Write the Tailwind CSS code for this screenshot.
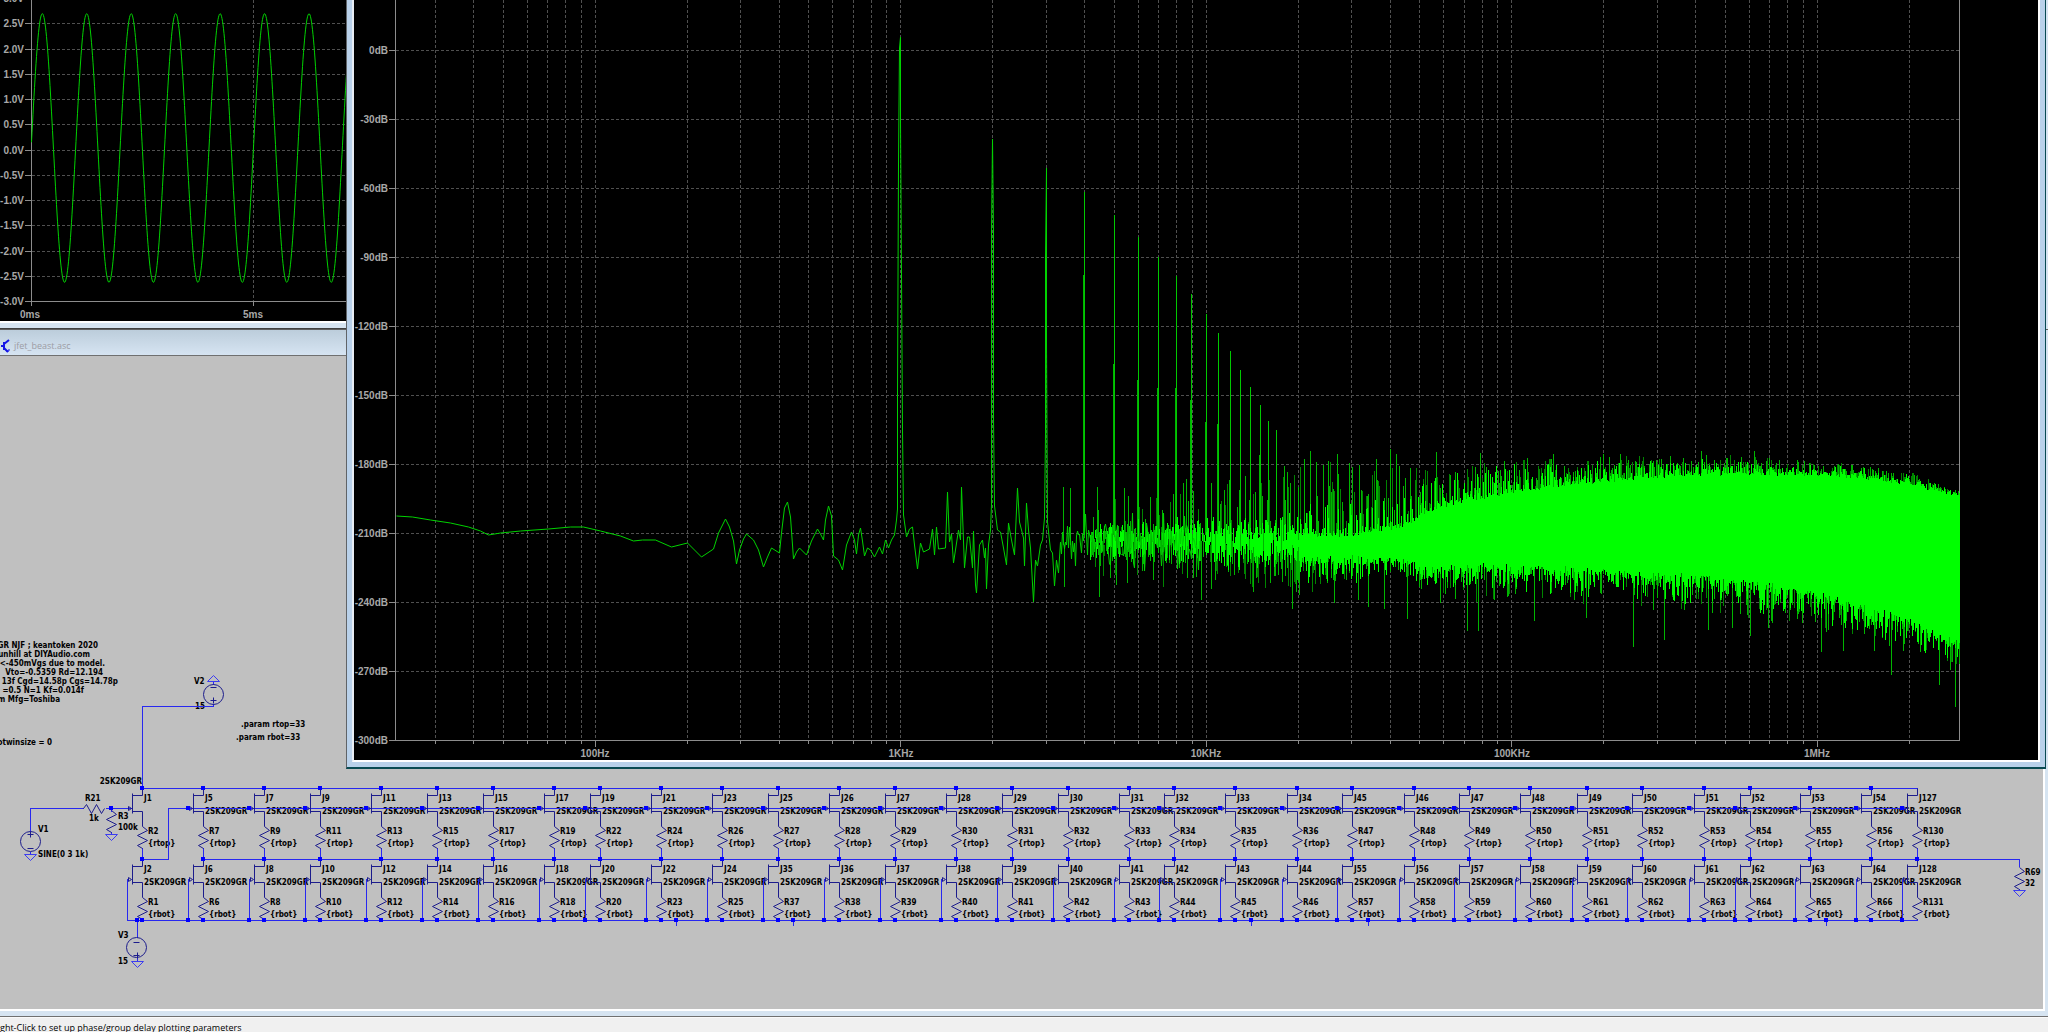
<!DOCTYPE html>
<html lang="en">
<head>
  <meta charset="UTF-8" />
  <meta name="viewport" content="width=device-width, initial-scale=1" />
  <title>jfet_beast.asc</title>
  <script src="https://cdn.jsdelivr.net/npm/@tailwindcss/browser@4"></script>
</head>
<body class="h-screen overflow-hidden flex flex-col bg-[#f0f0f0] font-['Open_Sans',sans-serif]">

  <!-- MDI area -->
  <main class="relative flex-1 overflow-hidden bg-[#d6e4f1]">

    <!-- Transient window -->
    <section class="absolute top-0 left-0 w-[347px] h-[329px] bg-[#d6e4f1] border-b border-[#404040]">
      <div class="bg-black border-b-2 border-white">
        <svg id="wave" class="block w-full" viewBox="0 0 347 321" font-family="'Liberation Sans', Arial, sans-serif" font-size="10" font-weight="bold"></svg>
      </div>
    </section>

    <!-- Schematic window -->
    <section class="absolute top-[329px] inset-x-0 bottom-0 flex flex-col border-t border-[#606060] border-b border-b-[#707070] pr-[3px] pb-[5px] bg-[#d6e4f1]">
      <header class="h-[25px] pt-[6px] flex items-center gap-1 bg-linear-to-b from-[#bccddb] to-[#d6e4f2]">
        <svg class="w-[10px] h-[14px]" viewBox="0 0 10 14" fill="none" stroke="#1414e6" stroke-width="2"><path d="M1 7h3M4 3v8M4 5l5-4M4 9l4 4" /><path d="M6 12h3v-2" stroke-width="1" /></svg>
        <h1 class="text-[9px] leading-3 text-[#9c9ca4]">jfet_beast.asc</h1>
      </header>
      <div class="flex-1 overflow-hidden bg-[#c0c0c0] border-t border-t-[#707070] border-r-2 border-b-2 border-white">
        <svg id="schematic" class="block w-full" viewBox="0 356 2043 652" font-family="'DejaVu Sans Condensed', 'DejaVu Sans', sans-serif" font-size="8" font-weight="bold"></svg>
      </div>
    </section>

    <!-- FFT window -->
    <section class="absolute top-0 left-[346px] right-[2px] h-[769px] border-x border-b-2 border-l-[#606468] border-r-[#0a4a52] border-b-[#0a4a52] bg-[#b9d1ea] pl-[5px] pr-[5px] pb-[5px]">
      <div class="h-full bg-black border-x-2 border-b-2 border-l-[#e8eef4] border-r-white border-b-white">
        <svg id="fft" class="block w-full h-full" viewBox="354 0 1684 760" preserveAspectRatio="xMinYMin" font-family="'Liberation Sans', Arial, sans-serif" font-size="10" font-weight="bold"></svg>
      </div>
    </section>
  </main>

  <footer class="h-[15px] border-t border-[#fafafa] text-[9px] leading-[20px] text-black whitespace-nowrap">ght-Click to set up phase/group delay plotting parameters</footer>

  <script>
    const path = (d, stroke, extra = '') => `<path d="${d}" fill="none" stroke="${stroke}" ${extra}/>`;
    const text = (x, y, s, anchor = 'start', fill = '#000') => `<text x="${x}" y="${y}" text-anchor="${anchor}" fill="${fill}">${s}</text>`;
    const crisp = 'shape-rendering="crispEdges"';
    const AXIS = '#8c8c8c', GRID = '#505050', LABEL = '#a8a8a8';

    // ---- transient plot
    function drawWave() {
      let grid = '', ticks = 'M31.5 0V306M25 301.5H347M253.5 301V306', out = '';
      for (let v = 3; v >= -3; v -= 0.5) {
        const y = Math.floor(150 - v * 50.5) + 0.5;
        if (v < 3 && v > -3) grid += `M32 ${y}H347`;
        ticks += `M25 ${y}H31`;
        out += text(24, y + 3, v.toFixed(1) + 'V', 'end', LABEL);
      }
      grid += 'M253.5 0V301';
      let d = '';
      for (let x = 31.5; x <= 348; x += 0.5) {
        const y = 148 - 134.3 * Math.sin((x - 31.2) / 44.45 * 2 * Math.PI);
        d += (d ? 'L' : 'M') + x + ' ' + y.toFixed(1);
      }
      out += text(30, 318, '0ms', 'middle', LABEL) + text(253, 318, '5ms', 'middle', LABEL);
      document.getElementById('wave').innerHTML =
        path(grid, GRID, crisp + ' stroke-dasharray="3 2"') + path(ticks, AXIS, crisp) + path(d, '#00d200') + out;
    }

    // ---- FFT plot
    let seed = 7;
    const rnd = () => (seed = (seed * 16807) % 2147483647) / 2147483647;
    const fx = f => 595.1 + 305.55 * Math.log10(f / 100);

    // x, dense top, dense bottom, spike top, spike bottom
    const envelope = [
      [1030, 537, 545, 495, 580], [1100, 532, 552, 490, 582], [1160, 528, 557, 488, 590],
      [1200, 525, 558, 485, 595], [1250, 523, 561, 475, 592], [1300, 533, 562, 460, 594],
      [1350, 533, 560, 462, 590], [1400, 525, 562, 463, 588], [1430, 508, 572, 468, 592],
      [1460, 500, 570, 466, 602], [1490, 494, 568, 462, 602], [1512, 490, 570, 459, 600],
      [1560, 483, 572, 456, 604], [1600, 479, 574, 456, 606], [1650, 475, 578, 455, 610],
      [1700, 473, 580, 454, 614], [1750, 472, 584, 456, 622], [1817, 472, 596, 461, 630],
      [1860, 475, 608, 464, 642], [1910, 482, 624, 472, 652], [1940, 490, 640, 484, 668], [1959, 493, 645, 489, 668]
    ];
    function envAt(x) {
      let i = 0;
      while (i < envelope.length - 2 && envelope[i + 1][0] < x) i++;
      const a = envelope[i], b = envelope[i + 1], t = (x - a[0]) / (b[0] - a[0]);
      return a.map((v, k) => v + (b[k] - v) * t);
    }

    function drawFft() {
      let grid = '', ticks = 'M395.5 0V740.5H1959.5V0', out = '';
      for (let db = 0; db <= 300; db += 30) {
        const y = Math.round(50 + db * 2.3) + 0.5;
        if (db < 300) grid += `M396 ${y}H1959`;
        ticks += `M389 ${y}H395`;
        out += text(388, y + 3, (db ? -db : 0) + 'dB', 'end', LABEL);
      }
      for (let dec = 10; dec <= 1e6; dec *= 10) {
        for (let m = 1; m < 10; m++) {
          const x = Math.floor(fx(dec * m)) + 0.5;
          if (x < 396 || x > 1958) continue;
          grid += `M${x} 0V740`;
          ticks += `M${x} 741V${m === 1 ? 747 : 744}`;
        }
      }
      [[100, '100Hz'], [1e3, '1KHz'], [1e4, '10KHz'], [1e5, '100KHz'], [1e6, '1MHz']]
        .forEach(([f, s]) => out += text(Math.round(fx(f)), 757, s, 'middle', LABEL));

      // low frequency part, bin by bin
      const low = [396,516, 412,517, 430,520, 450,523, 468,527, 480,531, 488,535, 500,533, 520,531, 548,529, 570,527, 583,527, 600,531,
        620,536, 633,541, 642,540, 655,540, 671,547, 687,543, 701,557, 713,549, 718,533, 724,521, 725,519, 729,527, 733,541, 736,564, 739,550, 743,539,
        746,534, 753,540, 758,550, 763,567, 767,557, 771,548, 779,553, 781,533, 784,508, 787,502, 790,517, 793,559, 796,552, 799,548, 806,555,
        811,541, 817,529, 820,534, 823,540, 825,520, 828,506, 831,516, 833,556, 838,560, 842,570, 846,545, 851,532, 854,540, 856,554, 858,535,
        860,528, 862,541, 864,556, 867,548, 870,550, 874,557, 879,547, 882,554, 885,540, 888,548, 891,540, 894,535, 896,520, 897,509,
        897,395, 898,165, 899,48, 900,37, 900,120, 901,275, 902,430, 903,515, 906,537, 909,529, 912,527, 914,545, 917,569, 920,543, 923,552, 929,549, 932,529,
        934,555, 936,527, 938,549, 945,548, 947,492, 949,542, 951,534, 953,563, 958,530, 960,540, 961,487, 964,568, 967,537, 969,537, 972,568,
        973,531, 975,585, 976,593, 979,545, 982,540, 984,558, 985,548, 986,589, 988,545, 990,530, 991,505, 991,230, 992,139, 993,232, 993,418, 994,506, 997,530,
        1000,532, 1003,548, 1006,565, 1008,523, 1011,540, 1014,555, 1017,488, 1019,522, 1023,538, 1024,566, 1026,503, 1028,530, 1030,548,
        1033,602, 1035,560, 1037,566, 1040,545, 1042,540, 1044,518, 1045,433, 1045,256, 1046,168, 1046,345, 1047,522, 1050,550, 1052,553, 1054,586, 1056,560, 1058,573, 1060,542];
      let d = '';
      for (let i = 0; i < low.length; i += 2) d += (i ? 'L' : 'M') + (low[i] + 0.5) + ' ' + low[i + 1];
      for (let x = 1061; x < 1200; x++) {
        const r = rnd(), amp = r < 0.8 ? 16 : 30;
        d += `L${x + 0.5} ${Math.round(541 + (rnd() - 0.5) * 2 * amp)}`;
      }

      // one column per pixel: solid core plus dimmer spikes
      let core = '', dim = '', mid = '';
      for (let x = 1090; x < 1960; x++) {
        const e = envAt(x), sparse = x < 1300;
        if (sparse) {
          // short runs around the noise floor, denser to the right
          const c = 541 + (rnd() - 0.5) * 14, h = 3 + rnd() * (10 + (x - 1090) / 16);
          const run = `M${x + 0.5} ${Math.round(c - h)}V${Math.round(c + h)}`;
          if (rnd() < 0.45 + (x - 1090) / 380) core += run; else mid += run;
        } else {
          const top = e[1] - Math.pow(rnd(), 3) * (e[1] - e[3]) * (x < 1420 ? 0.45 : 0.9) + rnd() * 4;
          const bot = e[2] + Math.pow(rnd(), 2.2) * (e[4] - e[2]) * 0.8 - rnd() * 6;
          core += `M${x + 0.5} ${Math.round(top)}V${Math.round(bot)}`;
        }
        const up = Math.round(e[1] - (e[1] - e[3]) * Math.pow(rnd(), x < 1420 ? 1.2 : 1));
        const dn = Math.round(e[2] + (e[4] - e[2]) * Math.pow(rnd(), 1.8));
        const pUp = x < 1250 ? 0.2 : x < 1330 ? 0.42 : 0.66;
        if (rnd() < pUp) { if (rnd() < 0.5) dim += `M${x + 0.5} ${up}V545`; else mid += `M${x + 0.5} ${up}V545`; }
        if (rnd() < (x < 1250 ? 0.3 : 0.5)) { if (rnd() < 0.4) dim += `M${x + 0.5} ${dn}V545`; else mid += `M${x + 0.5} ${dn}V545`; }
      }
      [[1063, 487], [1070, 488], [1097, 487], [1124, 488], [1128, 496], [1150, 497], [1183, 483], [1186, 479], [1211, 483], [1224, 490], [1245, 476],
       [1284, 466], [1290, 483], [1304, 459], [1310, 451], [1316, 462], [1328, 461], [1337, 454], [1352, 467], [1376, 459], [1390, 449], [1396, 454], [1436, 452], [1480, 453],
       [1553, 454], [1603, 454], [1620, 454], [1701, 451], [1754, 451], [1064, 587], [1099, 597], [1116, 585], [1153, 580], [1187, 578], [1201, 600], [1211, 589], [1253, 592],
       [1292, 609], [1299, 595], [1334, 603], [1358, 600], [1368, 607], [1384, 609], [1407, 619], [1440, 603], [1467, 631], [1478, 631], [1534, 621], [1586, 618],
       [1633, 647], [1664, 640], [1708, 630], [1732, 628], [1750, 636], [1768, 628], [1821, 652], [1843, 651], [1874, 651], [1891, 675], [1903, 651], [1939, 685], [1950, 670], [1955, 707], [1959, 664]]
        .forEach(([x, y]) => mid += `M${x + 0.5} ${y}V545`);

      // harmonics: x, tip, where the skirt gets wider
      let tips = '';
      [[1084, 192, 275], [1114, 215, 364], [1138, 237, 380], [1158, 257, 388], [1176, 276, 388], [1191, 294, 400], [1206, 314, 422],
       [1218, 333, 424], [1230, 351, 480], [1240, 370, 490], [1250, 387, 500], [1260, 405, 455], [1268, 421, 500], [1276, 430, 520]]
        .forEach(([x, y, w]) => { tips += `M${x + 0.5} ${y}V535`; mid += `M${x - 0.5} ${w}V535`; });

      document.getElementById('fft').innerHTML =
        path(grid, GRID, crisp + ' stroke-dasharray="3 2"') + path(ticks, AXIS, crisp) +
        path(dim, '#008400', crisp) + path(mid, '#00b400', crisp) + path(tips, '#00c800', crisp) +
        path(core, '#00ff00', crisp) + path(d, '#00d200') + out;
    }

    // ---- schematic
    // x of the drain, upper JFET, upper R, lower JFET, lower R
    const cells = [
      [142, 'J1', 'R2', 'J2', 'R1'], [203, 'J5', 'R7', 'J6', 'R6'], [264, 'J7', 'R9', 'J8', 'R8'], [320, 'J9', 'R11', 'J10', 'R10'],
      [381, 'J11', 'R13', 'J12', 'R12'], [437, 'J13', 'R15', 'J14', 'R14'], [493, 'J15', 'R17', 'J16', 'R16'], [554, 'J17', 'R19', 'J18', 'R18'],
      [600, 'J19', 'R22', 'J20', 'R20'], [661, 'J21', 'R24', 'J22', 'R23'], [722, 'J23', 'R26', 'J24', 'R25'], [778, 'J25', 'R27', 'J35', 'R37'],
      [839, 'J26', 'R28', 'J36', 'R38'], [895, 'J27', 'R29', 'J37', 'R39'], [956, 'J28', 'R30', 'J38', 'R40'], [1012, 'J29', 'R31', 'J39', 'R41'],
      [1068, 'J30', 'R32', 'J40', 'R42'], [1129, 'J31', 'R33', 'J41', 'R43'], [1174, 'J32', 'R34', 'J42', 'R44'], [1235, 'J33', 'R35', 'J43', 'R45'],
      [1297, 'J34', 'R36', 'J44', 'R46'], [1352, 'J45', 'R47', 'J55', 'R57'], [1414, 'J46', 'R48', 'J56', 'R58'], [1469, 'J47', 'R49', 'J57', 'R59'],
      [1530, 'J48', 'R50', 'J58', 'R60'], [1587, 'J49', 'R51', 'J59', 'R61'], [1642, 'J50', 'R52', 'J60', 'R62'], [1704, 'J51', 'R53', 'J61', 'R63'],
      [1750, 'J52', 'R54', 'J62', 'R64'], [1810, 'J53', 'R55', 'J63', 'R65'], [1871, 'J54', 'R56', 'J64', 'R66'], [1917, 'J127', 'R130', 'J128', 'R131']
    ];

    function drawSchematic() {
      let wire = '', sym = '', gnd = '', dots = '', labels = '';
      const dot = (x, y) => dots += `<rect x="${x - 2}" y="${y - 2}" width="4" height="4"/>`;
      const zig = (x, y) => sym += `M${x} ${y}l5 4l-10 5l10 5l-10 5l5 3`;
      const jfet = (x, y) => sym += `M${x} ${y}v7h-10M${x - 10} ${y + 5}v20M${x - 10} ${y + 23}h10v15M${x - 14} ${y + 18}l3 2l-3 2z`;
      const source = (x, y) => `<circle cx="${x}" cy="${y}" r="10" fill="none" stroke="#1c1c8c"/>`;
      const tri = (x, y, h = 6) => gnd += `M${x - 6} ${y}h12l-6 ${h}z`;

      cells.forEach(([x, ja, ra, jb, rb], i) => {
        jfet(x, 788); zig(x, 826); wire += `M${x} 847V859`;
        jfet(x, 859); zig(x, 897); wire += `M${x} 918V920`;
        wire += `M${x - 15} 920V879h1`;
        if (i < cells.length - 1) dot(x, 788);
        dot(x, 859);
        if (i < cells.length - 1) dot(x, 920);
        if (i) { dot(x - 15, 808); dot(x - 15, 920); }
        labels += text(x + 2, 801, ja) + text(x + 6, 834, ra) + text(x + 6, 846, '{rtop}') +
          text(x + 2, 872, jb) + text(x + 2, 885, '2SK209GR') + text(x + 6, 905, rb) + text(x + 6, 917, '{rbot}');
        labels += i ? text(x + 2, 814, '2SK209GR') : text(142, 784, '2SK209GR', 'end');
      });

      wire += 'M142 788H1917M142 859H168V808H1907M203 859H2019V866M127 920H1917M142 788V706H213M137 920V937';
      wire += 'M30 831V808H83M105 808H132M111 808V811';
      [676, 793, 1251, 1368, 1826].forEach(x => { dot(x, 920); wire += `M${x} 920v5`; });
      dot(111, 808); dot(137, 920);

      zig(2019, 867); zig(111, 810);
      wire += 'M2019 888v2M111 831v3M30 851v3M137 957v4M213 681v3M213 703v3';
      tri(2019, 890); tri(111, 834); tri(30, 854); tri(137, 961); tri(213, 681, -6);
      sym += 'M83 808l3 -4l5 9l5 -9l5 9l3 -5';
      sym += 'M27 834h6M30 831v6M27 848h6M210 687h6M210 700h6M213 697v6M133 942h6M133 955h6M137 952v6';

      const notes = [[98, 648, 'GR NJF ; keantoken 2020'], [90, 657, 'unhill at DIYAudio.com'], [105, 666, '&lt;-450mVgs due to model.'],
        [103, 675, 'Vto=-0.5359 Rd=12.194'], [118, 684, '13f Cgd=14.58p Cgs=14.78p'], [84, 693, '=0.5 N=1 Kf=0.014f'], [60, 702, 'm Mfg=Toshiba'], [52, 745, 'otwinsize = 0']];
      notes.forEach(([x, y, s]) => labels += text(x, y, s, 'end'));
      labels += text(241, 727, '.param rtop=33') + text(236, 740, '.param rbot=33');
      labels += text(194, 684, 'V2') + text(195, 709, '15') + text(118, 938, 'V3') + text(118, 964, '15');
      labels += text(38, 832, 'V1') + text(38, 857, 'SINE(0 3 1k)') + text(85, 801, 'R21') + text(89, 821, '1k');
      labels += text(118, 819, 'R3') + text(118, 830, '100k') + text(2025, 875, 'R69') + text(2025, 886, '32');

      document.getElementById('schematic').innerHTML = labels + '<g transform="translate(0.5 0.5)">' +
        path(wire, '#2828f0', crisp) + path(sym, '#1c1c8c') + path(gnd, '#3c3cf0') +
        source(30, 841) + source(213, 694) + source(136, 947) + '</g>' +
        `<g fill="#0000ff" ${crisp}>${dots}</g>`;
    }

    drawWave();
    drawFft();
    drawSchematic();
  </script>
</body>
</html>
